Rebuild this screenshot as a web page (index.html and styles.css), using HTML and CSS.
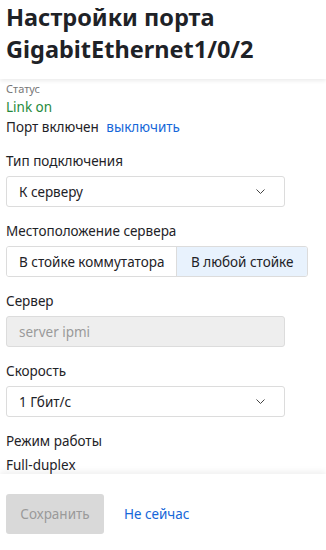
FILE: index.html
```html
<!DOCTYPE html>
<html lang="ru">
<head>
    <meta charset="UTF-8">
    <meta name="viewport" content="width=device-width, initial-scale=1.0">
    <title>Настройки порта</title>
    <link rel="stylesheet" href="styles.css">
</head>
<body>
    <div class="page">
        <div class="header">
            <h1>Настройки порта GigabitEthernet1/0/2</h1>
        </div>

        <div class="content">
            <div class="status-label">Статус</div>
            <div class="status-value">Link on</div>
            <div class="port-state">Порт включен <a href="#" class="link">выключить</a></div>

            <div class="field">
                <label class="field-label">Тип подключения</label>
                <div class="select">
                    <span>К серверу</span>
                    <svg class="chevron" width="9" height="5" viewBox="0 0 9 5"><path d="M0.5 0.5l4 4 4-4" fill="none" stroke="#444" stroke-width="1"/></svg>
                </div>
            </div>

            <div class="field">
                <label class="field-label">Местоположение сервера</label>
                <div class="segmented">
                    <button class="segment">В стойке коммутатора</button>
                    <button class="segment active">В любой стойке</button>
                </div>
            </div>

            <div class="field">
                <label class="field-label">Сервер</label>
                <div class="input disabled">server ipmi</div>
            </div>

            <div class="field">
                <label class="field-label">Скорость</label>
                <div class="select">
                    <span>1 Гбит/с</span>
                    <svg class="chevron" width="9" height="5" viewBox="0 0 9 5"><path d="M0.5 0.5l4 4 4-4" fill="none" stroke="#444" stroke-width="1"/></svg>
                </div>
            </div>

            <div class="field">
                <label class="field-label">Режим работы</label>
                <div class="plain-value">Full-duplex</div>
            </div>
        </div>

        <div class="footer">
            <button class="btn-save" disabled>Сохранить</button>
            <a href="#" class="link">Не сейчас</a>
        </div>
    </div>
</body>
</html>
```

FILE: styles.css
```css
body {
    margin: 0;
    font-family: "Noto Sans", "Open Sans", sans-serif;
    color: #1e2227;
    background: #fff;
}
.page {
    height: 550px;
    display: flex;
    flex-direction: column;
    overflow: hidden;
}
.header {
    height: 79px;
    padding: 0 6px;
    box-shadow: 0 2px 4px rgba(0, 0, 0, 0.08);
    position: relative;
    z-index: 1;
    flex-shrink: 0;
}
h1 {
    margin: 0;
    padding-top: 1px;
    font-size: 23.5px;
    line-height: 32px;
    font-weight: bold;
    width: 280px;
}
.content {
    flex: 1;
    overflow: hidden;
    padding: 2px 6px 0;
    font-size: 13.5px;
}
.status-label {
    font-size: 11px;
    color: #777;
    line-height: 16px;
}
.status-value {
    color: #258a3c;
    line-height: 20px;
}
.port-state {
    line-height: 20px;
}
.link {
    color: #1667d9;
    text-decoration: none;
    margin-left: 4px;
}
.field {
    margin-top: 14px;
}
.field-label {
    display: block;
    line-height: 20px;
    margin-bottom: 5px;
}
.select, .input {
    width: 279px;
    height: 31px;
    box-sizing: border-box;
    border: 1px solid #dcdcdc;
    border-radius: 3px;
    padding: 0 12px;
    display: flex;
    align-items: center;
    justify-content: space-between;
}
.chevron {
    margin-right: 7px;
}
.input.disabled {
    background: #eeeeee;
    color: #9a9a9a;
}
.segmented {
    display: flex;
    width: 302px;
    height: 31px;
    border: 1px solid #dcdcdc;
    border-radius: 3px;
    box-sizing: border-box;
    overflow: hidden;
}
.segment {
    font: inherit;
    color: inherit;
    background: #fff;
    border: none;
    padding: 0 12px;
}
.segment.active {
    background: #e8f2fd;
    border-left: 1px solid #dcdcdc;
    flex: 1;
}
.plain-value {
    line-height: 18px;
    margin-top: 5px;
}
.footer {
    height: 76px;
    flex-shrink: 0;
    display: flex;
    align-items: flex-start;
    padding: 20px 6px 0;
    box-sizing: border-box;
    gap: 16px;
    box-shadow: 0 -3px 6px rgba(0, 0, 0, 0.06);
    position: relative;
    font-size: 13.5px;
}
.footer .link {
    line-height: 40px;
}
.btn-save {
    width: 98px;
    height: 40px;
    font: inherit;
    background: #d9d9d9;
    color: #9a9a9a;
    border: none;
    border-radius: 3px;
}
```
